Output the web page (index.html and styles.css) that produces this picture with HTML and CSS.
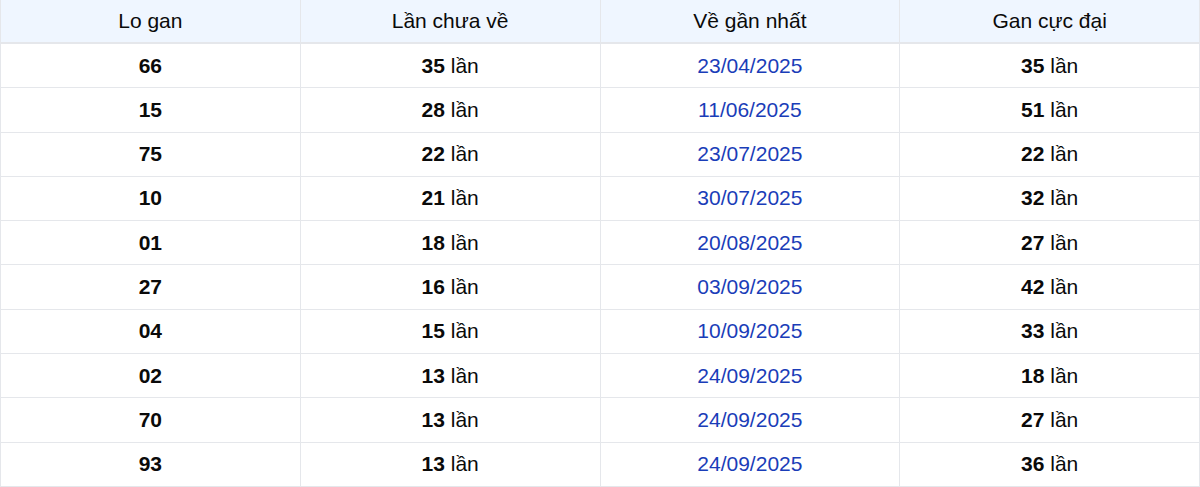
FILE: index.html
```html
<!DOCTYPE html>
<html lang="vi">
<head>
<meta charset="utf-8">
<link rel="stylesheet" href="styles.css">
</head>
<body>
<table class="gan-table">
  <thead>
    <tr><th>Lo gan</th><th>Lần chưa về</th><th>Về gần nhất</th><th>Gan cực đại</th></tr>
  </thead>
  <tbody>
    <tr><td><b>66</b></td><td><b>35</b> lần</td><td class="date">23/04/2025</td><td><b>35</b> lần</td></tr>
    <tr><td><b>15</b></td><td><b>28</b> lần</td><td class="date">11/06/2025</td><td><b>51</b> lần</td></tr>
    <tr><td><b>75</b></td><td><b>22</b> lần</td><td class="date">23/07/2025</td><td><b>22</b> lần</td></tr>
    <tr><td><b>10</b></td><td><b>21</b> lần</td><td class="date">30/07/2025</td><td><b>32</b> lần</td></tr>
    <tr><td><b>01</b></td><td><b>18</b> lần</td><td class="date">20/08/2025</td><td><b>27</b> lần</td></tr>
    <tr><td><b>27</b></td><td><b>16</b> lần</td><td class="date">03/09/2025</td><td><b>42</b> lần</td></tr>
    <tr><td><b>04</b></td><td><b>15</b> lần</td><td class="date">10/09/2025</td><td><b>33</b> lần</td></tr>
    <tr><td><b>02</b></td><td><b>13</b> lần</td><td class="date">24/09/2025</td><td><b>18</b> lần</td></tr>
    <tr><td><b>70</b></td><td><b>13</b> lần</td><td class="date">24/09/2025</td><td><b>27</b> lần</td></tr>
    <tr><td><b>93</b></td><td><b>13</b> lần</td><td class="date">24/09/2025</td><td><b>36</b> lần</td></tr>
  </tbody>
</table>
</body>
</html>
```

FILE: styles.css
```css
html, body {
  margin: 0;
  padding: 0;
  background: #ffffff;
}
body {
  font-family: "Liberation Sans", Arial, sans-serif;
  font-size: 21px;
  color: #0a0a0a;
}
.gan-table {
  width: 1200px;
  border-collapse: collapse;
  table-layout: fixed;
}
.gan-table th,
.gan-table td {
  border-left: 1px solid #e5e7eb;
  border-right: 1px solid #e5e7eb;
  text-align: center;
  width: 25%;
}
.gan-table th {
  background: #eff6ff;
  font-weight: normal;
  line-height: 24px;
  padding: 9px 8px;
  border-bottom: 2px solid #e5e7eb;
}
.gan-table td {
  line-height: 24px;
  padding: 9.65px 8px;
  border-bottom: 1px solid #e5e7eb;
}
.gan-table b {
  font-weight: bold;
}
.gan-table .date {
  color: #1a3db8;
}
```
